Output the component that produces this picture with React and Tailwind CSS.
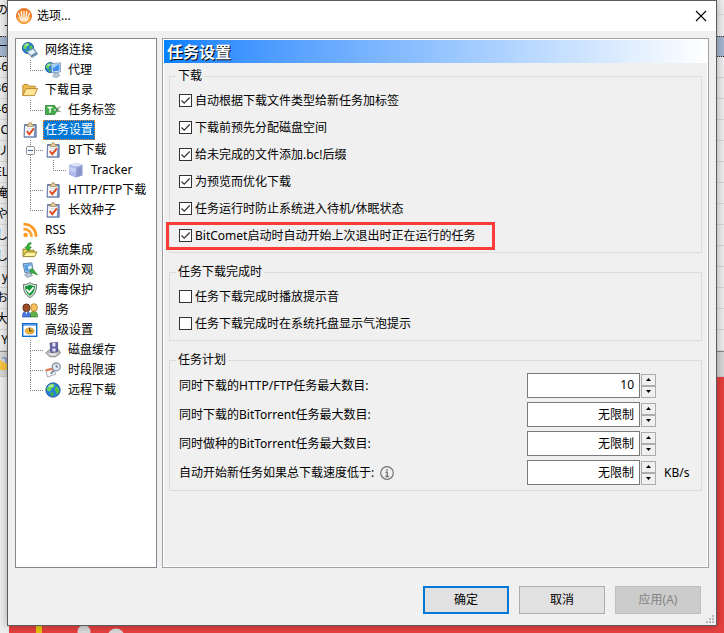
import { useState } from "react";

function Globe({ cx, cy, r }) {
  return (
    <g>
      <circle cx={cx} cy={cy} r={r} fill="#2480dc" stroke="#14508f" strokeWidth="0.8" />
      <g transform={`translate(${cx - r} ${cy - r}) scale(${r / 7})`}>
        <path d="M1.5 4.500L5 1l3.500.2L8 4 5.500 5.500 5 8 3 8.500 1 7z" fill="#6ad64f" />
        <path d="M10 3l2.500 2 .5 3.500L11 11.500 9.500 8.500l-1-2z" fill="#54c344" />
        <path d="M4.500 9l3.500 1-1 3-2-.6z" fill="#48b53f" />
        <ellipse cx="5" cy="3" rx="2.600" ry="1.400" fill="#fff" opacity="0.45" />
      </g>
    </g>
  );
}

const icons = {
  network: (
    <>
      <Globe cx={6} cy={6} r={5.6} />
      <path d="M4.500 9.600l7-3.600 4.100 6-5.600 3.600z" fill="#9dbad6" stroke="#56789b" strokeWidth="0.700" />
      <path d="M6.200 10l4.800-2.500 2.200 3-4.400 2.400z" fill="#e4f2fc" />
      <path d="M9 14.400l5.800-3.200" stroke="#3f6589" strokeWidth="1" />
    </>
  ),
  proxy: (
    <>
      <Globe cx={5.2} cy={5.6} r={5} />
      <path d="M6 1.800L15.600.8v9L7 11z" fill="#d8e6f4" stroke="#6e8fb5" strokeWidth="0.800" />
      <path d="M7.200 3l7.200-.9v6.500L8 9.500z" fill="#3d8ef0" />
      <path d="M7.200 3l7.200-.9-6.800 4.300z" fill="#a4d0ff" />
      <path d="M9.800 10.800h3.200l1.800 3-4 2-3-1.600z" fill="#b9c8d8" stroke="#7990a8" strokeWidth="0.600" />
    </>
  ),
  folder: (
    <>
      <path d="M.8 13.500V3.600l1-1h4l1.200 1.600h6.200V7" fill="#f0bf4e" stroke="#a87518" strokeWidth="0.800" />
      <path d="M.8 13.600L4 6.600h11.600l-3.200 7z" fill="#ffe595" stroke="#b08226" strokeWidth="0.900" />
    </>
  ),
  tag: (
    <>
      <path d="M.4 3.500h9.200L12.500 8l-2.900 4.500H.4z" fill="#43ab48" stroke="#2a8436" strokeWidth="0.800" />
      <path d="M2.500 5.500h5M5 5.500v5.300" stroke="#fff" strokeWidth="1.500" />
      <circle cx="10.200" cy="8" r="1" fill="#fff" />
      <path d="M10.500 7.800l5-3.300M10.500 8.200l5 1.400M13 6v4" stroke="#5f8061" strokeWidth="0.900" />
    </>
  ),
  clipboard: (
    <>
      <path d="M2.500 2.500h11.700v12.700H2z" fill="#7b93c0" stroke="#556a98" strokeWidth="0.800" />
      <path d="M3.200 4h9.400l-.8 10.200H2.800z" fill="#f8f9fd" />
      <path d="M5 6.500h6M4.800 8.500h6" stroke="#cdd4e6" strokeWidth="0.700" />
      <path d="M5 4.400V2.600h1.600L7.200.8h2l.6 1.800h1.600v1.800z" fill="#f0d9a8" stroke="#8f7448" strokeWidth="0.700" />
      <path d="M4.800 9.200l2.500 3 4.600-5.800" fill="none" stroke="#e44a20" strokeWidth="1.900" />
    </>
  ),
  tracker: (
    <>
      <path d="M1 3l7-2 6.500 1.600v10.800L8 15.600 1 12.500z" fill="#8c95cc" />
      <path d="M1 3l7-2 6.500 1.600-5.900 2.200z" fill="#dfe3fa" />
      <path d="M1 3l7.600 1.800-.4 10.600L1 12.500z" fill="#b1baea" />
      <path d="M2 6l5.600 1.300M2 8l5.600 1.300" stroke="#e9ecff" strokeWidth="0.800" />
      <path d="M9.400 5.300l4.500-1.800" stroke="#c5cbef" strokeWidth="0.700" />
    </>
  ),
  rss: (
    <>
      <circle cx="3.600" cy="13" r="2.300" fill="#ff9b25" />
      <path d="M1.500 6.800c4.800 0 8 3.300 8 8M1.500 2.200c7.600 0 12.600 5 12.600 12.600" fill="none" stroke="#ff9b25" strokeWidth="2.800" />
      <path d="M1.500 6.200c5 0 8.600 3.600 8.600 8.400" fill="none" stroke="#ffc069" strokeWidth="0.700" />
    </>
  ),
  integrate: (
    <>
      <path d="M1 14V7h3.600l1 1.200h6.400v2" fill="#e8cf58" stroke="#8c7a1c" strokeWidth="0.900" />
      <path d="M1 14.600l3-4.600h11l-2.600 4.600z" fill="#fff3a0" stroke="#8c7a1c" strokeWidth="0.900" />
      <path d="M9 .6C5.800 1 4.800 2.600 4.800 5H2.800l3.400 4L9.400 5H7.200c0-1.600.4-2.600 2-3.200z" fill="#36b636" stroke="#177a1b" strokeWidth="0.600" />
    </>
  ),
  appearance: (
    <>
      <path d="M1 1.800L9.800.8l1.400 8.400-8.200 1.600z" fill="#9cc2e2" stroke="#527ca6" strokeWidth="0.900" />
      <path d="M2.400 3l6.200-.8 1 5.800-5.800 1.300z" fill="#4f9be6" />
      <path d="M2.600 12.600l5.400-1.800 2.400 2.800-5.200 2z" fill="#b9cbdb" stroke="#6b8299" strokeWidth="0.700" />
      <path d="M7.400 5.400l4.200 2.600 4 5-4.600-2-2 .6z" fill="#39ad3b" stroke="#1d7522" strokeWidth="0.600" />
      <circle cx="7.800" cy="5.600" r="2" fill="#d8ecfb" />
    </>
  ),
  shield: (
    <>
      <path d="M8 .6c2 1.600 4 2 6.600 2C14.600 8.600 13 13 8 15.600 3 13 1.400 8.600 1.400 2.600 4 2.600 6 2.200 8 .6z" fill="#dce5dc" stroke="#52645a" strokeWidth="0.900" />
      <path d="M8 2.400c1.600 1 3 1.500 5 1.600-.2 4.600-1.600 7.800-5 9.800-3.400-2-4.800-5.200-5-9.800 2-.1 3.400-.6 5-1.600z" fill="#159537" />
      <path d="M4.600 7.400l2.800 3 4.200-5" fill="none" stroke="#fff" strokeWidth="1.800" />
    </>
  ),
  services: (
    <>
      <path d="M8 15c0-4 1-5.600 3.800-5.600s3.800 1.600 3.800 5.600z" fill="#5eb04b" stroke="#2e7525" strokeWidth="0.600" />
      <rect x="8.800" y="1.800" width="6.400" height="7.400" rx="2.800" fill="#f6c05c" stroke="#a86f1d" strokeWidth="0.700" />
      <path d="M.4 15c0-4 1-5.600 3.900-5.600s4 1.600 4 5.600z" fill="#4a79e0" stroke="#27489c" strokeWidth="0.600" />
      <rect x="1" y="2" width="6.800" height="7.600" rx="3" fill="#9d4c28" stroke="#4d2414" strokeWidth="0.800" />
      <path d="M3.400 9.800h2l-1 2.400z" fill="#fff" />
    </>
  ),
  advanced: (
    <>
      <rect x="0.700" y="1.700" width="14" height="12.600" fill="#fff" stroke="#0f6fd0" strokeWidth="1.400" />
      <path d="M1 3h13.400" stroke="#0f6fd0" strokeWidth="1" />
      <ellipse cx="7.600" cy="9" rx="4.400" ry="3" fill="#f0b83a" stroke="#a8771e" strokeWidth="0.600" />
      <path d="M7.600 5.400V9h2.800" fill="none" stroke="#5d4312" strokeWidth="1.100" />
    </>
  ),
  disk: (
    <>
      <path d="M.6 11l4-3.400h9l2 3.400-5 3.800H5z" fill="#b8b8bc" stroke="#6f6f75" strokeWidth="0.700" />
      <path d="M2 11.400h11l-3 2.200H5.600z" fill="#ececef" />
      <path d="M5 1l7.600-.4v9L6 10.600z" fill="#6363a8" stroke="#45457c" strokeWidth="0.700" />
      <path d="M7.400 1h3v3.600h-3zM7.400 6.400h3.200v3.200H7.400z" fill="#e5e5f4" />
    </>
  ),
  schedule: (
    <>
      <path d="M.6 7.600l8-1.800 2 6.400-8 2.800z" fill="#fff" stroke="#9297a6" strokeWidth="0.800" />
      <path d="M.6 7.600l8-1.800.6 1.800-8 2z" fill="#ee7444" />
      <path d="M8.800 8.400l-3 3.400" stroke="#7b8494" strokeWidth="2" />
      <circle cx="11.200" cy="4.800" r="4" fill="#dfe8f1" stroke="#88909e" strokeWidth="1.300" />
      <path d="M11.200 2.600V5H13" fill="none" stroke="#596475" strokeWidth="0.900" />
    </>
  ),
  globe: <Globe cx={8} cy={8} r={7.2} />,
};

function Icon({ name }) {
  return (
    <svg viewBox="0 0 16 16" className="h-4 w-4 shrink-0" aria-hidden="true">
      {icons[name]}
    </svg>
  );
}

// guides: one entry for each level of indent
// "line" passes through, "tee" branches and goes on, "end" is the last branch
const treeItems = [
  { icon: "network", text: "网络连接", guides: [] },
  { icon: "proxy", text: "代理", guides: ["end"] },
  { icon: "folder", text: "下载目录", guides: [] },
  { icon: "tag", text: "任务标签", guides: ["end"] },
  { icon: "clipboard", text: "任务设置", guides: [] },
  { icon: "clipboard", text: "BT下载", guides: ["tee"], expander: true },
  { icon: "tracker", text: "Tracker", guides: ["line", "end"] },
  { icon: "clipboard", text: "HTTP/FTP下载", guides: ["tee"] },
  { icon: "clipboard", text: "长效种子", guides: ["end"] },
  { icon: "rss", text: "RSS", guides: [] },
  { icon: "integrate", text: "系统集成", guides: [] },
  { icon: "appearance", text: "界面外观", guides: [] },
  { icon: "shield", text: "病毒保护", guides: [] },
  { icon: "services", text: "服务", guides: [] },
  { icon: "advanced", text: "高级设置", guides: [] },
  { icon: "disk", text: "磁盘缓存", guides: ["tee"] },
  { icon: "schedule", text: "时段限速", guides: ["tee"] },
  { icon: "globe", text: "远程下载", guides: ["end"] },
];

function Guide({ type, expander }) {
  const branch = type === "tee" || type === "end";
  const through = type === "tee" || type === "line";
  return (
    <span className="relative flex h-5 w-[23px] shrink-0 flex-col pl-2">
      <span className={`h-[11px] w-[13px] border-l border-dotted border-[#808080] ${branch ? "border-b" : ""}`} />
      <span className={`h-[9px] w-[13px] border-dotted border-[#808080] ${through ? "border-l" : ""}`} />
      {expander && (
        <svg viewBox="0 0 9 9" className="absolute top-[6px] left-1 h-[9px] w-[9px]" aria-hidden="true">
          <rect x="0.500" y="0.500" width="8" height="8" rx="1" fill="#fafafa" stroke="#919191" />
          <path d="M2 4.500h5" stroke="#3c5fa8" />
        </svg>
      )}
    </span>
  );
}

function Tree({ selected, onSelect }) {
  return (
    <ul className="w-[142px] shrink-0 border border-[#828790] bg-white pt-px pl-[6px]">
      {treeItems.map((item) => (
        <li key={item.text} className="flex h-5 items-center">
          {item.guides.map((type, i) => (
            <Guide key={i} type={type} expander={item.expander} />
          ))}
          <Icon name={item.icon} />
          <button
            type="button"
            onClick={() => onSelect(item.text)}
            className={
              item.text === selected
                ? "ml-[5px] h-5 border border-dotted border-[#ff8728] bg-[#0078d7] px-px whitespace-nowrap text-white"
                : "ml-[5px] h-5 border border-transparent px-px whitespace-nowrap"
            }
          >
            {item.text}
          </button>
        </li>
      ))}
    </ul>
  );
}

function Group({ title, children }) {
  return (
    <fieldset className="min-w-0 border border-[#dcdcdc] px-[9px] pb-[3px]">
      <legend className="-ml-[3px] px-[2px] leading-[18px]">{title}</legend>
      <div className="pt-[2px]">{children}</div>
    </fieldset>
  );
}

function Check({ label, defaultChecked, marked }) {
  return (
    <div className="flex h-[27px] items-center">
      <label className="relative flex items-center gap-[3px]">
        <input
          type="checkbox"
          defaultChecked={defaultChecked}
          className="peer h-[13px] w-[13px] shrink-0 appearance-none border border-[#333333] bg-white"
        />
        <svg
          viewBox="0 0 13 13"
          className="pointer-events-none absolute left-0 hidden h-[13px] w-[13px] peer-checked:block"
          aria-hidden="true"
        >
          <path d="M2.500 6.500l2.700 2.700 5.500-5.700" fill="none" stroke="#333" strokeWidth="1.200" />
        </svg>
        <span className="whitespace-nowrap">{label}</span>
        {marked && (
          <span className="pointer-events-none absolute -inset-y-[5px] -right-5 -left-[13px] border-3 border-[#fb3a3a]" />
        )}
      </label>
    </div>
  );
}

function Spinner({ id, label, value, unit, info }) {
  return (
    <div className="flex h-[29px] items-center">
      <label htmlFor={id} className="whitespace-nowrap">
        {label}
      </label>
      {info && (
        <svg viewBox="0 0 14 14" className="ml-[6px] h-[14px] w-[14px]" aria-hidden="true">
          <circle cx="7" cy="7" r="6.300" fill="none" stroke="#757575" strokeWidth="1.200" />
          <path d="M7 3v1.700M5.500 6.200h1.700v4.300M5.300 10.500h3.600" fill="none" stroke="#757575" strokeWidth="1.400" />
        </svg>
      )}
      <input
        id={id}
        type="text"
        defaultValue={value}
        className="ml-auto h-[25px] w-[113px] border border-[#7a7a7a] bg-white px-[5px] pb-[2px] text-right outline-none"
      />
      <div className="ml-px flex flex-col">
        <button type="button" aria-label="增加" className="flex h-3 w-[15px] items-center justify-center border border-[#acacac] bg-[#f0f0f0]">
          <svg viewBox="0 0 5 3" className="h-[3px] w-[5px]"><path d="M0 3L2.500 0 5 3z" /></svg>
        </button>
        <button type="button" aria-label="减少" className="flex h-3 w-[15px] items-center justify-center border border-[#acacac] bg-[#f0f0f0]">
          <svg viewBox="0 0 5 3" className="h-[3px] w-[5px]"><path d="M0 0L2.500 3 5 0z" /></svg>
        </button>
      </div>
      <span className="w-9 shrink-0 pl-2">{unit}</span>
    </div>
  );
}

const behind = ["46", "36", "46", "C", "リ", "EL", "俺", "や", "し", "し", "y", "お", "大", "Y"];

// the windows that lie under the dialog
function Desktop() {
  return (
    <div className="absolute inset-0 flex flex-col overflow-hidden bg-[#ededed] leading-5" aria-hidden="true">
      <div className="h-[15px] shrink-0 border-b border-[#d8d8d8]">
        <span className="flex w-2 justify-end">の</span>
      </div>
      <div className="h-[21px] shrink-0">
        <span className="flex w-2 justify-end">-</span>
      </div>
      <div className="h-[21px] shrink-0 border-y border-dotted border-[#40301c] bg-[#a3b6cf]">
        <span className="flex w-2 justify-end">ー</span>
      </div>
      {behind.map((text, i) => (
        <div key={i} className="h-[21px] shrink-0 border-b border-[#d6d6d6]">
          <span className="flex w-2 justify-end">{text}</span>
        </div>
      ))}
      <div className="h-[26px] shrink-0 border-y border-t-[#8c8c8c] border-b-[#c8c8c8] bg-[#d6d6d6]">
        <svg viewBox="0 0 7 16" className="mt-1 h-4 w-[7px]">
          <path d="M0 4l4 3h3v7H0z" fill="#f6c53f" />
          <path d="M2 2h4v5" fill="none" stroke="#4e7fd0" />
        </svg>
      </div>
      <div className="flex flex-1">
        <div className="w-[9px] bg-[#ededed]" />
        <div className="flex flex-1 items-end bg-[#e5403f]">
          <div className="ml-[27px] h-[10px] w-[6px] bg-[#e5c60f]" />
          <svg viewBox="0 0 100 10" className="ml-[30px] h-[10px] w-[100px]">
            <circle cx="12" cy="8.500" r="6.500" fill="#d9d9d9" />
            <circle cx="44" cy="14" r="8.500" fill="#d9d9d9" />
          </svg>
        </div>
      </div>
    </div>
  );
}

export default function App() {
  const [selected, setSelected] = useState("任务设置");

  return (
    <div className="relative flex min-h-screen flex-col font-['Noto_Sans','Noto_Sans_CJK_SC',sans-serif] text-[12px] leading-[18px] text-black">
      <Desktop />
      <main className="relative mx-[7px] mb-[7px] flex flex-1 flex-col border border-[#5c5c5c] bg-[#f0f0f0] shadow-[0_0_8px_rgba(0,0,0,0.3)]">
        <header className="flex h-[30px] items-center bg-white pr-[9px] pl-2">
          <svg viewBox="0 0 16 16" className="h-4 w-4" aria-hidden="true">
            <circle cx="8" cy="8" r="7.600" fill="#f47a1c" stroke="#d9662a" strokeWidth="0.700" />
            <path d="M1.200 9a6.800 6.800 0 0 0 13.600 0z" fill="#ffa63c" />
            <path d="M5.300 3.500L6.400 13M10.700 3.500L9.600 13M8 3.500V13M2.700 5.500l2.200 6.500M13.300 5.500L11.100 12" stroke="#fff3e0" strokeWidth="1.500" strokeLinecap="round" />
          </svg>
          <h1 className="ml-[5px]">选项...</h1>
          <button type="button" aria-label="关闭" className="ml-auto">
            <svg viewBox="0 0 12 12" className="h-3 w-3">
              <path d="M1 1l10 10M11 1L1 11" stroke="#000" strokeWidth="1.100" />
            </svg>
          </button>
        </header>

        <div className="flex flex-1 gap-[5px] px-[7px] pt-[7px]">
          <Tree selected={selected} onSelect={setSelected} />

          <section className="min-w-0 flex-1 border border-[#a0a0a5] bg-white p-px">
            <div className="flex h-full flex-col bg-[#f0f0f0]">
              <h2 className="flex h-[23px] items-center bg-linear-to-r from-[#0080ff] to-white pl-[3px] text-[16px] font-bold text-white [text-shadow:1px_1px_0_#000]">
                任务设置
              </h2>
              <div className="flex flex-col gap-[10px] px-[5px] pt-1">
                <Group title="下载">
                  <Check label="自动根据下载文件类型给新任务加标签" defaultChecked />
                  <Check label="下载前预先分配磁盘空间" defaultChecked />
                  <Check label="给未完成的文件添加.bc!后缀" defaultChecked />
                  <Check label="为预览而优化下载" defaultChecked />
                  <Check label="任务运行时防止系统进入待机/休眠状态" defaultChecked />
                  <Check label="BitComet启动时自动开始上次退出时正在运行的任务" defaultChecked marked />
                </Group>
                <Group title="任务下载完成时">
                  <Check label="任务下载完成时播放提示音" />
                  <Check label="任务下载完成时在系统托盘显示气泡提示" />
                </Group>
                <Group title="任务计划">
                  <Spinner id="max-http" label="同时下载的HTTP/FTP任务最大数目:" value="10" />
                  <Spinner id="max-bt" label="同时下载的BitTorrent任务最大数目:" value="无限制" />
                  <Spinner id="max-seed" label="同时做种的BitTorrent任务最大数目:" value="无限制" />
                  <Spinner id="min-speed" label="自动开始新任务如果总下载速度低于:" value="无限制" unit="KB/s" info />
                </Group>
              </div>
            </div>
          </section>
        </div>

        <footer className="relative flex justify-end gap-[10px] px-[15px] pt-[18px] pb-[11px]">
          <button type="button" className="h-7 w-[86px] border-2 border-[#0078d7] bg-[#e1e1e1]">确定</button>
          <button type="button" className="h-7 w-[86px] border border-[#adadad] bg-[#e1e1e1]">取消</button>
          <button type="button" disabled className="h-7 w-[86px] border border-[#bfbfbf] bg-[#cccccc] text-[#838383]">应用(A)</button>
          <svg viewBox="0 0 8 8" className="absolute right-[2px] bottom-[2px] h-2 w-2" aria-hidden="true">
            <path d="M6 0h2v2H6zM3 3h2v2H3zM6 3h2v2H6zM0 6h2v2H0zM3 6h2v2H3zM6 6h2v2H6z" fill="#b8b8b8" />
          </svg>
        </footer>
      </main>
    </div>
  );
}
